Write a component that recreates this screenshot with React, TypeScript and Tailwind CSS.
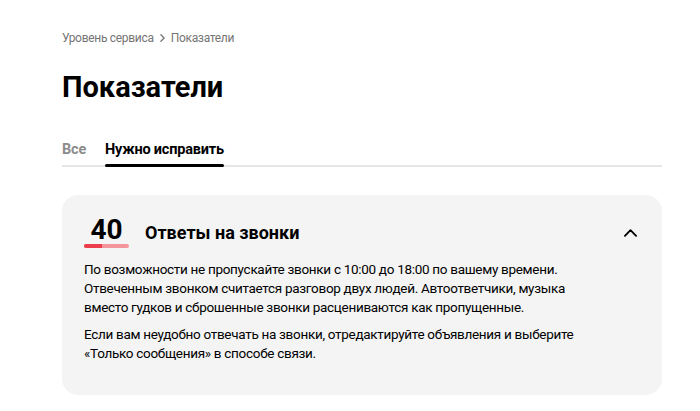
import React from 'react';

const FONT = { fontFamily: 'Roboto, "Noto Sans", sans-serif' };

const Chevron: React.FC<{ up?: boolean; className?: string }> = ({ up, className }) => (
  <svg viewBox="0 0 14 8" className={className} fill="none" stroke="currentColor" strokeWidth={2} strokeLinecap="round" strokeLinejoin="round">
    {up ? <path d="M1 7l6-6 6 6" /> : <path d="M1 1l6 6 6-6" />}
  </svg>
);

const App: React.FC = () => {
  return (
    <div className="min-h-[411px] bg-white text-black pl-[62px] pr-[38px] antialiased" style={FONT}>
      {/* breadcrumbs */}
      <div className="pt-[30px] flex items-center gap-[6px] text-[12px] leading-4 tracking-[-0.3px] text-[#757575]">
        <span>Уровень сервиса</span>
        <svg viewBox="0 0 6 10" className="w-[5px] h-[8px]" fill="none" stroke="currentColor" strokeWidth={1.6} strokeLinecap="round" strokeLinejoin="round">
          <path d="M1 1l4 4-4 4" />
        </svg>
        <span>Показатели</span>
      </div>

      <h1 className="mt-[23px] text-[29px] leading-[36px] font-bold">Показатели</h1>

      {/* tabs */}
      <div className="mt-[35px] flex gap-[19px] border-b-2 border-[#e6e6e6] text-[14.5px] leading-5 font-bold tracking-[-0.2px]">
        <button className="pb-[5px] text-[#8c8c8c]">Все</button>
        <button className="relative pb-[5px]">
          Нужно исправить
          <span className="absolute left-0 right-0 -bottom-[2px] h-[3px] rounded-full bg-black" />
        </button>
      </div>

      {/* card */}
      <div className="mt-[28px] rounded-2xl bg-[#f4f4f4] pl-[22px] pr-[25px] pt-[21px] pb-[32px]">
        <div className="flex items-start">
          <div className="w-[45px] flex flex-col items-center">
            <span className="text-[28px] leading-[28px] font-bold">40</span>
            <div className="w-[45px] h-[4px] rounded-full bg-[#f4959c] overflow-hidden flex">
              <div className="w-[18px] h-full bg-[#ec3e4d]" />
            </div>
          </div>
          <h2 className="ml-[16px] mt-[5px] text-[18px] leading-6 font-bold">Ответы на звонки</h2>
          <Chevron up className="ml-auto mt-[13px] w-[13px] h-[8px]" />
        </div>

        <div className="mt-[12px] max-w-[505px] text-[13.5px] leading-[19px] tracking-[-0.3px] space-y-[8px]">
          <p>
            По возможности не пропускайте звонки с 10:00 до 18:00 по вашему времени. Отвеченным звонком считается
            разговор двух людей. Автоответчики, музыка вместо гудков и сброшенные звонки расцениваются как пропущенные.
          </p>
          <p>
            Если вам неудобно отвечать на звонки, отредактируйте объявления и выберите «Только сообщения» в способе связи.
          </p>
        </div>
      </div>
    </div>
  );
};

export default App;
